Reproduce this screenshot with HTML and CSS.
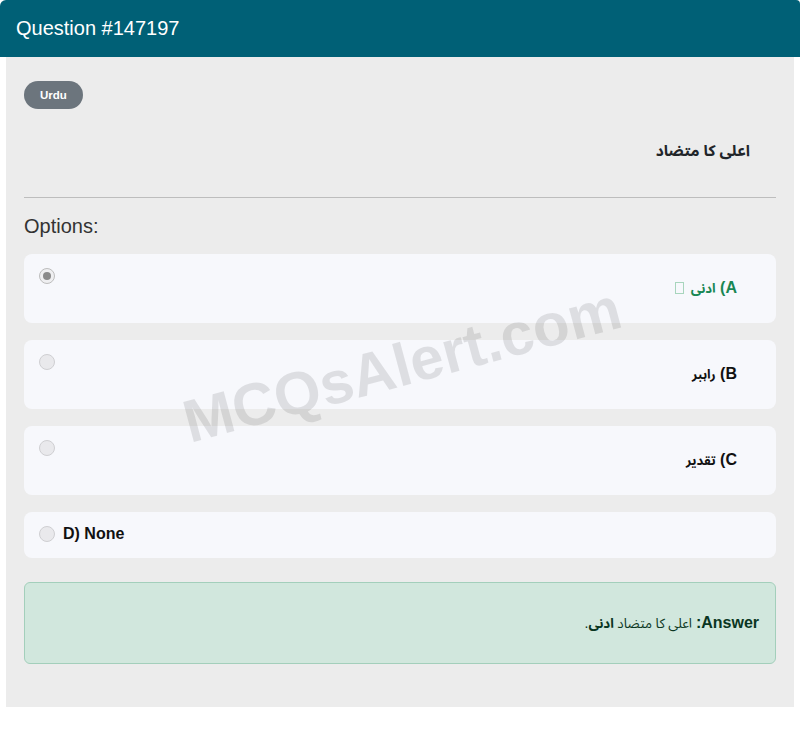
FILE: index.html
```html
<!DOCTYPE html>
<html lang="ur">
<head>
<meta charset="utf-8">
<title>Question #147197</title>
<link rel="stylesheet" href="styles.css">
</head>
<body>
<div class="card">
  <div class="card-header">Question #147197</div>
  <div class="card-body">
    <span class="badge">Urdu</span>
    <h5 class="question" dir="rtl"><span class="ur">اعلی کا متضاد</span></h5>
    <hr class="divider">
    <div class="options-title">Options:</div>
    <div class="options">
      <div class="option">
        <span class="radio checked"></span>
        <div class="opt-label rtl correct" dir="rtl">A) <span class="ur">ادنی</span> <span class="tofu"></span></div>
      </div>
      <div class="option">
        <span class="radio"></span>
        <div class="opt-label rtl" dir="rtl">B) <span class="ur">راہبر</span></div>
      </div>
      <div class="option">
        <span class="radio"></span>
        <div class="opt-label rtl" dir="rtl">C) <span class="ur">تقدیر</span></div>
      </div>
      <div class="option option-ltr">
        <span class="radio"></span>
        <div class="opt-label">D) None</div>
      </div>
    </div>
    <div class="answer" dir="rtl"><strong>Answer:</strong> <span class="ur">اعلی کا متضاد <strong>ادنی</strong></span>.</div>
    <div class="watermark">MCQsAlert.com</div>
  </div>
</div>
</body>
</html>
```
FILE: styles.css
```css
html, body {
  margin: 0;
  padding: 0;
  background: #ffffff;
}
body {
  font-family: "Liberation Sans", Arial, "DejaVu Sans", sans-serif;
  color: #212529;
}
.ur {
  font-family: "Noto Sans Arabic", "Noto Naskh Arabic", "Noto Kufi Arabic", "Arial", "DejaVu Sans", sans-serif;
  font-size: 0.82em;
  line-height: 0;
}
.card {
  width: 800px;
}
.card-header {
  background: #006076;
  color: #ffffff;
  height: 57px;
  line-height: 56px;
  padding: 0 16px;
  font-size: 20px;
  border-radius: 6px 4px 0 0;
  box-sizing: border-box;
}
.card-body {
  position: relative;
  margin: 0 6px;
  background: #ececec;
  padding: 24px 18px 43px;
  overflow: hidden;
}
.badge {
  display: inline-block;
  background: #6c757d;
  color: #ffffff;
  font-size: 11.5px;
  font-weight: bold;
  height: 28px;
  line-height: 28px;
  padding: 0 16px;
  border-radius: 14px;
  vertical-align: top;
}
.question {
  margin: 28px 0 0;
  padding-right: 26px;
  font-size: 18px;
  font-weight: bold;
  line-height: 26px;
  text-align: right;
  color: #212529;
}
.question .ur {
  font-size: 0.86em;
}
.divider {
  margin: 34px 0 0;
  border: 0;
  border-top: 1px solid #bdbdbd;
  height: 0;
}
.options-title {
  margin-top: 16px;
  font-size: 20px;
  line-height: 24px;
  color: #333333;
}
.options {
  margin-top: 16px;
  display: flex;
  flex-direction: column;
  gap: 17px;
}
.option {
  background: #f7f8fc;
  border-radius: 8px;
  padding: 14px 15px 15px 15px;
  display: flex;
  align-items: flex-start;
  gap: 8px;
}
.option-ltr {
  padding-bottom: 16px;
}
.radio {
  flex: none;
  width: 16px;
  height: 16px;
  box-sizing: border-box;
  border-radius: 50%;
  border: 1px solid #cfcfd2;
  background: #e9e9ec;
  position: relative;
}
.radio.checked {
  border-color: #bdbdbd;
  background: #efeff1;
}
.radio.checked::after {
  content: "";
  position: absolute;
  left: 3px;
  top: 3px;
  width: 8px;
  height: 8px;
  border-radius: 50%;
  background: #8a8a8a;
}
.opt-label {
  flex: 1;
  font-size: 16px;
  font-weight: bold;
  line-height: 16px;
  color: #111111;
}
.opt-label.rtl {
  text-align: right;
  padding: 12px 24px 12px 0;
  line-height: 16px;
}
.opt-label.correct {
  color: #198754;
}
.tofu {
  display: inline-block;
  width: 7px;
  height: 10px;
  border: 1px solid #a8d5bd;
  vertical-align: -1px;
  margin-right: 2px;
}
.answer {
  margin-top: 24px;
  background: #d1e7dd;
  border: 1px solid #a3cfbb;
  border-radius: 6px;
  padding: 31px 16px 31px;
  font-size: 14px;
  line-height: 18px;
  color: #0a3622;
  text-align: right;
}
.answer strong {
  font-weight: bold;
}
.answer > strong:first-child {
  font-size: 16px;
}
.answer .ur {
  font-size: 0.95em;
}
.watermark {
  position: absolute;
  left: 396px;
  top: 308px;
  transform: translate(-50%, -50%) rotate(-15deg);
  font-size: 60px;
  font-weight: bold;
  color: rgba(0, 0, 0, 0.1);
  white-space: nowrap;
  pointer-events: none;
}
```
